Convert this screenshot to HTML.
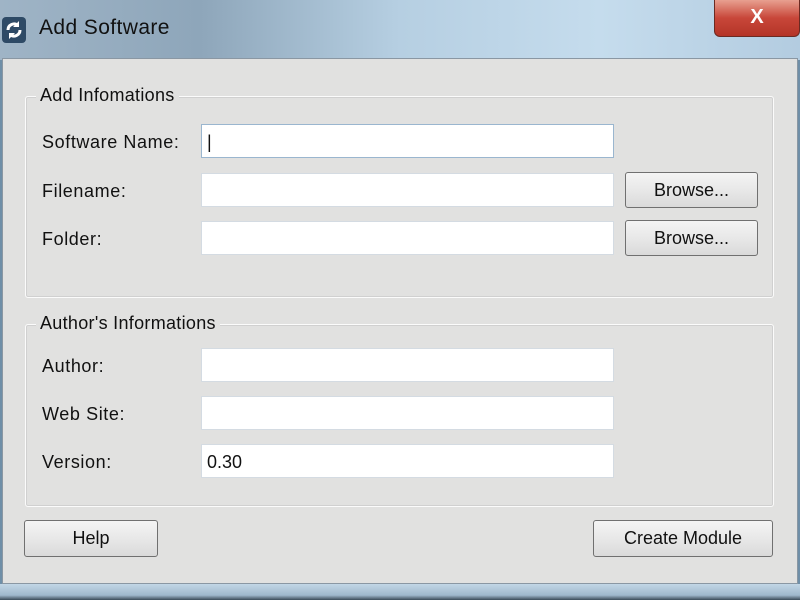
<!DOCTYPE html>
<html><head><style>
body{margin:0;width:800px;height:600px;overflow:hidden;position:relative;font-family:"Liberation Sans",sans-serif;background:#6f8fa8}
.tb{position:absolute;left:0;top:0;width:800px;height:60px;background:linear-gradient(90deg,#9fb4c6 0%,#8ea6ba 25%,#b6cfe2 50%,#c5dced 75%,#b3cce0 100%)}
.title{position:absolute;left:39px;top:16px;font-size:21px;color:#111;letter-spacing:0.4px}
.icon{position:absolute;left:2px;top:17px;width:24px;height:26px;background:#2e4a66;border-radius:4px}
.close{position:absolute;left:714px;top:0;width:84px;height:36px;border:1px solid #6b2a22;border-top:none;border-radius:0 0 6px 6px;background:linear-gradient(#e8a090,#c8473a 50%,#b43427);color:#fff;font-size:20px;font-weight:bold;text-align:center;line-height:34px}
.client{position:absolute;left:2px;top:58px;width:794px;height:524px;background:#e1e1e0;border:1px solid #8a97a3}
.bottom{position:absolute;left:0;top:584px;width:800px;height:16px;background:linear-gradient(#c2d6e6,#9fb8cc 70%,#3a4a58)}
.grp{position:absolute;border:1px solid #fbfbfb;box-shadow:inset 0 0 0 1px #d0d0d0;border-radius:3px}
.gl{position:absolute;font-size:18px;color:#111;background:#e1e1e0;padding:0 4px;letter-spacing:0.3px}
.lb{position:absolute;font-size:18px;color:#111;left:42px;letter-spacing:0.6px}
.in{position:absolute;left:201px;width:413px;height:34px;background:#fff;border:1px solid #d4dbe2;box-sizing:border-box;font-size:18px;padding:7px 5px;color:#111}
.bt{position:absolute;box-sizing:border-box;border:1px solid #707070;border-radius:3px;background:linear-gradient(#f4f4f4,#e8e8e8 50%,#dadada);font-size:18px;text-align:center;color:#111}
</style></head><body>
<div class="tb"></div>
<div class="icon"><svg width="24" height="26" viewBox="0 0 24 26"><path d="M6 13a6 6 0 0 1 10-4.5M18 13a6 6 0 0 1-10 4.5" stroke="#fff" stroke-width="3" fill="none"/><path d="M17 4v6h-6zM7 22v-6h6z" fill="#fff"/></svg></div>
<div class="title">Add Software</div>
<div class="close">X</div>
<div class="client"></div>
<div class="bottom"></div>
<div class="grp" style="left:25px;top:96px;width:747px;height:200px"></div>
<div class="gl" style="left:36px;top:85px">Add Infomations</div>
<div class="lb" style="top:132px">Software Name:</div>
<div class="in" style="top:124px;border-color:#9ab6cf">|</div>
<div class="lb" style="top:181px">Filename:</div>
<div class="in" style="top:173px"></div>
<div class="bt" style="left:625px;top:172px;width:133px;height:36px;line-height:34px">Browse...</div>
<div class="lb" style="top:229px">Folder:</div>
<div class="in" style="top:221px"></div>
<div class="bt" style="left:625px;top:220px;width:133px;height:36px;line-height:34px">Browse...</div>
<div class="grp" style="left:25px;top:324px;width:747px;height:181px"></div>
<div class="gl" style="left:36px;top:313px">Author's Informations</div>
<div class="lb" style="top:356px">Author:</div>
<div class="in" style="top:348px"></div>
<div class="lb" style="top:404px">Web Site:</div>
<div class="in" style="top:396px"></div>
<div class="lb" style="top:452px">Version:</div>
<div class="in" style="top:444px">0.30</div>
<div class="bt" style="left:24px;top:520px;width:134px;height:37px;line-height:35px">Help</div>
<div class="bt" style="left:593px;top:520px;width:180px;height:37px;line-height:35px">Create Module</div>
</body></html>
